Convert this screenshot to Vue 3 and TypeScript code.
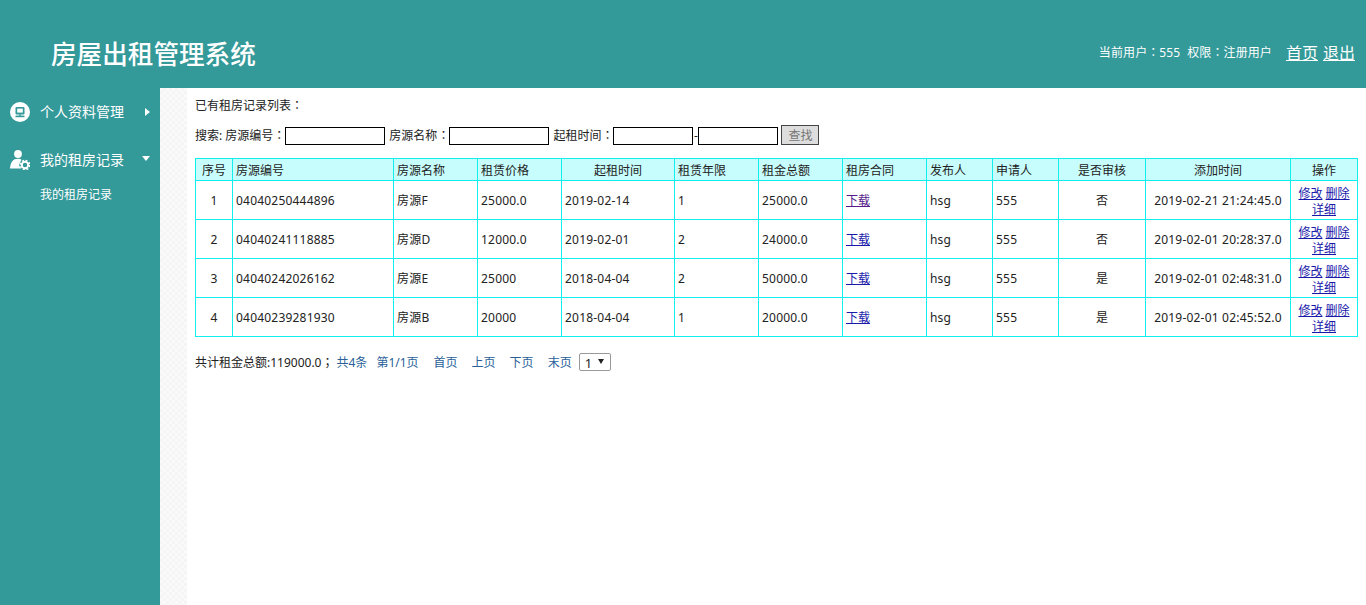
<template>
  <div class="page">
    <header class="top">
      <h1 class="logo">房屋出租管理系统</h1>
      <div class="user">
        <span class="user-info">当前用户<span class="colon">：</span>555</span>
        <span class="user-info role">权限<span class="colon">：</span>注册用户</span>
        <a class="user-link first" href="#">首页</a>
        <a class="user-link" href="#">退出</a>
      </div>
    </header>
    <div class="body">
      <aside class="side">
        <div class="menu-row first-row">
          <svg class="menu-icon" viewBox="0 0 20 20">
            <circle cx="10" cy="10" r="10" fill="#fff" />
            <rect x="5.5" y="5" width="9" height="7.5" rx="1" fill="#339999" />
            <rect x="7.2" y="6.6" width="5.6" height="4" fill="#fff" />
            <rect x="8.8" y="12.5" width="2.4" height="1.2" fill="#339999" />
            <rect x="5.5" y="13.6" width="9" height="1.6" fill="#339999" />
          </svg>
          <span class="menu-text">个人资料管理</span>
          <span class="arrow-right"></span>
        </div>
        <div class="menu-row second-row">
          <svg class="menu-icon" viewBox="0 0 20 20">
            <circle cx="8" cy="4" r="3.9" fill="#fff" />
            <path d="M0 18.5 C0.5 12 3 8.8 8 8.8 C9.5 8.8 10.5 9.1 11.5 9.8 L10 12.5 L9 15 L10 17 L11 18.5 Z" fill="#fff" />
            <circle cx="15" cy="15" r="3.2" fill="none" stroke="#fff" stroke-width="2" />
            <circle cx="15" cy="15" r="4.7" fill="none" stroke="#fff" stroke-width="1.4" stroke-dasharray="2 1.69" />
          </svg>
          <span class="menu-text">我的租房记录</span>
          <span class="arrow-down"></span>
        </div>
        <div class="sub-item">我的租房记录</div>
      </aside>
      <div class="strip"></div>
      <main class="content">
        <p class="list-title">已有租房记录列表<span class="colon">：</span></p>
        <form class="search" @submit.prevent>
          <span>搜索: 房源编号<span class="colon">：</span></span><input class="box" type="text" />
          <span class="gap">房源名称<span class="colon">：</span></span><input class="box" type="text" />
          <span class="gap">起租时间<span class="colon">：</span></span><input class="box date" type="text" /><span class="dash">-</span><input class="box date" type="text" />
          <button class="find" type="button" disabled>查找</button>
        </form>
        <table class="grid">
          <colgroup>
            <col v-for="w in widths" :key="w.id" :style="{ width: w.px + 'px' }" />
          </colgroup>
          <thead>
            <tr>
              <th class="mid">序号</th>
              <th>房源编号</th>
              <th>房源名称</th>
              <th>租赁价格</th>
              <th class="mid">起租时间</th>
              <th>租赁年限</th>
              <th>租金总额</th>
              <th>租房合同</th>
              <th>发布人</th>
              <th>申请人</th>
              <th class="mid">是否审核</th>
              <th class="mid">添加时间</th>
              <th class="mid">操作</th>
            </tr>
          </thead>
          <tbody>
            <tr v-for="(r, i) in rows" :key="r.code">
              <td class="mid">{{ i + 1 }}</td>
              <td>{{ r.code }}</td>
              <td>{{ r.name }}</td>
              <td>{{ r.price }}</td>
              <td>{{ r.start }}</td>
              <td>{{ r.years }}</td>
              <td>{{ r.total }}</td>
              <td><a :class="{ seen: i === 0 }" href="#">下载</a></td>
              <td>hsg</td>
              <td>555</td>
              <td class="mid">{{ r.checked }}</td>
              <td class="mid">{{ r.added }}</td>
              <td class="mid ops"><a href="#">修改</a> <a href="#">删除</a> <a href="#">详细</a></td>
            </tr>
          </tbody>
        </table>
        <div class="pager">
          <span>共计租金总额:119000.0<span class="colon">；</span></span>
          <span class="pg count">共4条</span>
          <span class="pg num">第1/1页</span>
          <span class="pg home">首页</span>
          <span class="pg wide">上页</span>
          <span class="pg wide">下页</span>
          <span class="pg wide">末页</span>
          <span class="select-wrap">
            <select class="page-select"><option>1</option></select>
            <i class="select-arrow"></i>
          </span>
        </div>
      </main>
    </div>
  </div>
</template>

<script setup lang="ts">
interface RentRow {
  code: string;
  name: string;
  price: string;
  start: string;
  years: number;
  total: string;
  checked: string;
  added: string;
}

const edges = [195, 232, 393, 477, 561, 674, 758, 842, 926, 992, 1058, 1145, 1290, 1357];
const widths = edges.slice(1).map((x, i) => ({ id: i, px: x - edges[i] }));

const rows: RentRow[] = [
  { code: '04040250444896', name: '房源F', price: '25000.0', start: '2019-02-14', years: 1, total: '25000.0', checked: '否', added: '2019-02-21 21:24:45.0' },
  { code: '04040241118885', name: '房源D', price: '12000.0', start: '2019-02-01', years: 2, total: '24000.0', checked: '否', added: '2019-02-01 20:28:37.0' },
  { code: '04040242026162', name: '房源E', price: '25000', start: '2018-04-04', years: 2, total: '50000.0', checked: '是', added: '2019-02-01 02:48:31.0' },
  { code: '04040239281930', name: '房源B', price: '20000', start: '2018-04-04', years: 1, total: '20000.0', checked: '是', added: '2019-02-01 02:45:52.0' },
];
</script>

<style>
html,
body {
  margin: 0;
  background: #fff;
}
</style>

<style scoped>
.page {
  height: 605px;
  display: flex;
  flex-direction: column;
  font-family: "Noto Sans", "Noto Sans CJK SC", sans-serif;
  font-size: 12px;
  color: #222;
  overflow: hidden;
}

.colon {
  font-family: "Noto Sans CJK TC", sans-serif;
}

.top {
  height: 88px;
  flex: none;
  background: #339999;
  color: #fff;
  display: flex;
  align-items: center;
  justify-content: space-between;
  padding: 16px 11px 0 51px;
  box-sizing: border-box;
}

.logo {
  margin: 0;
  font-family: "Liberation Serif", "Noto Sans CJK SC", serif;
  font-size: 25.6px;
  font-weight: 500;
}

.user {
  display: flex;
  align-items: center;
}

.user-info {
  font-size: 12px;
  letter-spacing: 0.1px;
}

.user-info.role {
  margin-left: 7px;
}

.user-link {
  color: #fff;
  font-size: 16px;
  margin-left: 5px;
}

.user-link.first {
  margin-left: 14px;
}

.body {
  flex: 1;
  display: flex;
  min-height: 0;
}

.side {
  width: 160px;
  flex: none;
  background: #339999;
  color: #fff;
}

.menu-row {
  display: flex;
  align-items: center;
  height: 20px;
  padding-left: 10px;
}

.first-row {
  margin-top: 14px;
}

.second-row {
  margin-top: 28px;
}

.menu-icon {
  width: 20px;
  height: 20px;
  flex: none;
}

.menu-text {
  font-size: 14px;
  margin-left: 10px;
  padding-bottom: 2px;
  width: 102px;
}

.arrow-right {
  width: 0;
  height: 0;
  margin-left: 3px;
  border-left: 5px solid #fff;
  border-top: 4px solid transparent;
  border-bottom: 4px solid transparent;
}

.arrow-down {
  width: 0;
  height: 0;
  margin-top: -3px;
  border-top: 5px solid #fff;
  border-left: 4.5px solid transparent;
  border-right: 4.5px solid transparent;
}

.sub-item {
  margin: 16px 0 0 40px;
  line-height: 18px;
  font-size: 12px;
}

.strip {
  width: 27px;
  flex: none;
  background: conic-gradient(#f5f5f5 25%, #fafafa 0 50%, #f5f5f5 0 75%, #fafafa 0) 0 0 / 6px 6px;
}

.content {
  flex: 1;
  min-width: 0;
  padding: 0 8px;
}

.list-title {
  margin: 9px 0 0;
  line-height: 16px;
}

.search {
  display: flex;
  align-items: center;
  height: 20px;
  margin-top: 11px;
}

.box {
  width: 100px;
  height: 18px;
  box-sizing: border-box;
  border: 1px solid #000;
  padding: 0;
  margin: 2px 0 0;
  background: #fff;
}

.box.date {
  width: 80px;
}

.dash {
  width: 5px;
  text-align: center;
}

.gap {
  margin-left: 4px;
}

.find {
  width: 38px;
  height: 20px;
  margin-left: 3px;
  padding: 0;
  font: inherit;
  color: #777;
  background: #ddd;
  border: 1px solid #444;
}

.grid {
  margin-top: 13px;
  width: 1162px;
  table-layout: fixed;
  border-collapse: collapse;
}

.grid th,
.grid td {
  border: 1px solid #11eeee;
  padding: 0 3px;
  text-align: left;
  font-weight: 400;
}

.grid th {
  height: 21px;
  background: #c8fdfd;
}

.grid td {
  height: 38px;
  letter-spacing: 0.2px;
}

.grid .mid {
  text-align: center;
}

.grid a {
  color: #1a1aaa;
  letter-spacing: 0;
}

.grid a.seen {
  color: #551a8b;
}

.grid td.ops {
  height: 34px;
  line-height: 16px;
  padding-top: 4px;
  letter-spacing: 0;
}

.pager {
  display: flex;
  align-items: center;
  margin-top: 16px;
  height: 18px;
}

.pg {
  color: #2a5f9a;
}

.pg.count {
  margin-left: 3px;
}

.pg.num {
  margin-left: 9px;
}

.pg.home {
  margin-left: 15px;
}

.pg.wide {
  margin-left: 14px;
}

.select-wrap {
  position: relative;
  display: flex;
  margin-left: 7px;
}

.page-select {
  appearance: none;
  width: 32px;
  height: 18px;
  padding: 0 0 0 5px;
  font: inherit;
  font-size: 13px;
  color: #222;
  background: #fff;
  border: 1px solid #999;
  border-radius: 2px;
}

.select-arrow {
  position: absolute;
  left: 19px;
  top: 6px;
  width: 0;
  height: 0;
  border-top: 5px solid #222;
  border-left: 3px solid transparent;
  border-right: 3px solid transparent;
  pointer-events: none;
}
</style>
